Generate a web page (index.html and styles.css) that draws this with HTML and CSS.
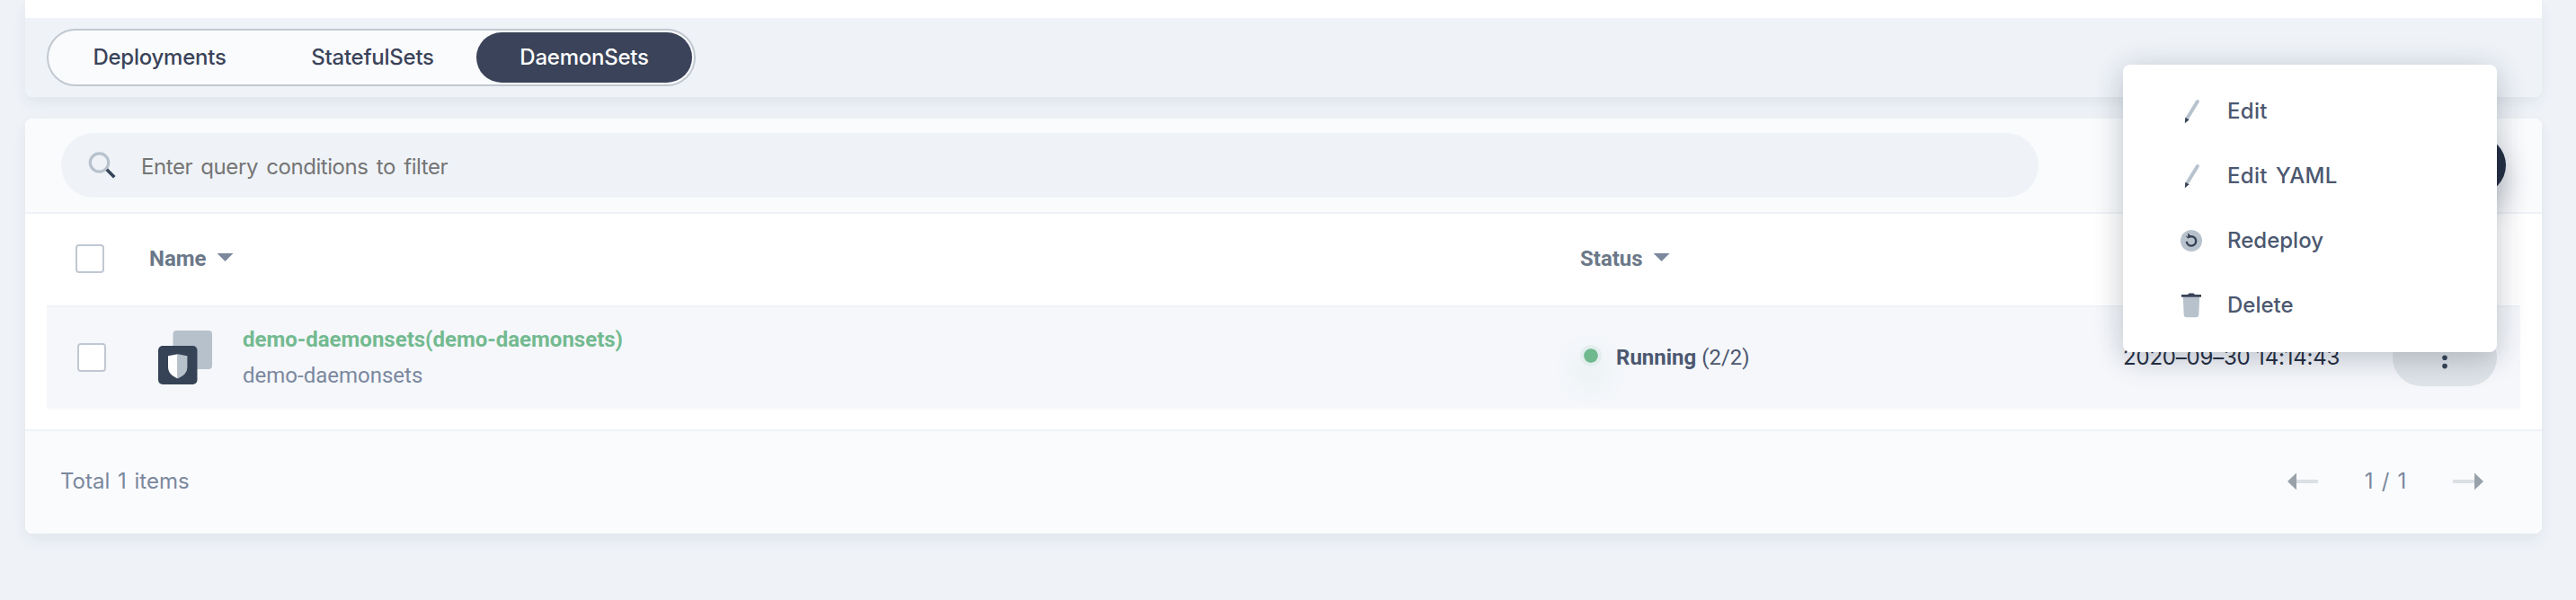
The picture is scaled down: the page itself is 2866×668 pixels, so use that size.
FILE: index.html
```html
<!DOCTYPE html>
<html lang="en">
<head>
<meta charset="utf-8">
<title>Workloads</title>
<link rel="stylesheet" href="styles.css">
</head>
<body>
<main class="page">
  <section class="card banner">
    <div class="banner-top"></div>
    <div class="banner-bar">
      <nav class="tabs">
        <a class="tab tab-deploy">Deployments</a>
        <a class="tab tab-stateful">StatefulSets</a>
        <a class="tab active">DaemonSets</a>
      </nav>
    </div>
  </section>

  <section class="card list">
    <header class="toolbar">
      <div class="search">
        <svg class="search-icon" width="32" height="32" viewBox="0 0 32 32">
          <circle cx="12.5" cy="13" r="10.2" fill="none" stroke="#b7c2cd" stroke-width="3.2"/>
          <path d="M20.800 20.800L29.300 29.300" stroke="#37445a" stroke-width="3.600"/>
        </svg>
        <span class="placeholder">Enter query conditions to filter</span>
      </div>
      <div class="create"></div>
    </header>

    <div class="table">
      <div class="row head">
        <span class="check"></span>
        <span class="col-name th">Name<i class="caret"></i></span>
        <span class="col-status th">Status<i class="caret"></i></span>
      </div>
      <div class="row item">
        <span class="check"></span>
        <div class="col-name workload">
          <svg width="80" height="80" viewBox="0 0 80 80">
            <rect x="26.5" y="10" width="43.5" height="43" rx="4" fill="#b6c1cc"/>
            <rect x="10" y="27" width="43.5" height="43" rx="5" fill="#364356"/>
            <path d="M31.700 36.300L21 38.200V50c0 7 4 10.500 10.700 13.500z" fill="#fff"/>
            <path d="M31.700 36.300L42.400 38.200V50c0 7-4 10.500-10.700 13.500z" fill="#b6c1cc"/>
          </svg>
          <div class="names">
            <a class="title">demo-daemonsets(demo-daemonsets)</a>
            <span class="desc">demo-daemonsets</span>
          </div>
        </div>
        <div class="col-status status"><i class="dot"></i><b>Running</b><span>(2/2)</span></div>
        <div class="col-date">2020–09–30 14:14:43</div>
        <div class="more">
          <svg width="8" height="28" viewBox="0 0 8 28" fill="#364356">
            <circle cx="4" cy="4.800" r="2.800"/><circle cx="4" cy="14.200" r="2.800"/><circle cx="4" cy="23.600" r="2.800"/>
          </svg>
          <div class="menu">
            <a class="menu-item"><svg width="32" height="32" viewBox="0 0 32 32"><path d="M12 22.700L22.900 5" stroke="#b7c2cd" stroke-width="4" stroke-linecap="round"/><path d="M9.300 22.800L13.700 25.300L8.800 29.300z" fill="#364356"/></svg><span class="edit">Edit</span></a>
            <a class="menu-item"><svg width="32" height="32" viewBox="0 0 32 32"><path d="M12 22.700L22.900 5" stroke="#b7c2cd" stroke-width="4" stroke-linecap="round"/><path d="M9.300 22.800L13.700 25.300L8.800 29.300z" fill="#364356"/></svg><span class="edit">Edit YAML</span></a>
            <a class="menu-item"><svg width="32" height="32" viewBox="0 0 32 32"><circle cx="16" cy="16" r="12" fill="#b7c2cd"/><path d="M12.300 11.200H16a5.200 5.200 0 1 1-5.200 5.600" fill="none" stroke="#364356" stroke-width="2.400"/><path d="M12.600 7.800V13L16 11.200M12.600 13l-2.200-1.800z" fill="#364356" stroke="#364356" stroke-width=".8"/></svg>Redeploy</a>
            <a class="menu-item"><svg width="32" height="32" viewBox="0 0 32 32"><path d="M6.800 6.500H25.200L24.300 26.500Q24 29.200 21.500 29.200H10.500Q8 29.200 7.700 26.500z" fill="#b7c2cd"/><path d="M5 4H12L13.500 2.500H18.500L20 4H27V6.800H5z" fill="#364356"/></svg>Delete</a>
          </div>
        </div>
      </div>
    </div>

    <footer class="footer">
      <span class="total">Total 1 items</span>
      <div class="pager">
        <svg width="34" height="20" viewBox="0 0 34 20"><path d="M9 8H34V12H9z" fill="#dbe0e6"/><path d="M0 10L10 .5V19.500z" fill="#99a1ab"/></svg>
        <span class="pages">1 / 1</span>
        <svg width="34" height="20" viewBox="0 0 34 20"><path d="M0 8H25V12H0z" fill="#dbe0e6"/><path d="M34 10L24 .5V19.500z" fill="#99a1ab"/></svg>
      </div>
    </footer>
  </section>
</main>
</body>
</html>
```
FILE: styles.css
```css
* { box-sizing: border-box; }
body {
  margin: 0;
  height: 668px;
  overflow: hidden;
  background: #eff3f8;
  font: 400 24px/32px Inter, "Liberation Sans", sans-serif;
  color: #3a4359;
}
.page {
  display: flex;
  flex-direction: column;
  gap: 24px;
  padding: 0 38px 0 28px;
}
.card {
  border-radius: 8px;
  box-shadow: 0 8px 16px rgba(36, 46, 66, .06), 0 0 28px rgba(36, 46, 66, .015);
}
.banner-top { height: 20px; background: #fff; }
.banner-bar {
  height: 88px;
  padding: 12px 24px;
  background: #eff3f8;
  border-radius: 0 0 8px 8px;
}
.tabs {
  display: flex;
  width: 722px;
  height: 64px;
  padding: 2px;
  border: 2px solid #c1c8d0;
  border-radius: 32px;
  background: #fafbfd;
}
.tab {
  flex: 0 0 240px;
  height: 56px;
  border-radius: 28px;
  line-height: 56px;
  font-weight: 500;
  letter-spacing: -.25px;
  text-align: center;
  white-space: nowrap;
}
.tab-deploy { flex-basis: 243px; }
.tab-stateful { flex-basis: 231px; }
.tab.active { background: #3a4359; color: #fff; }

.list { background: #fff; }
.toolbar {
  display: flex;
  justify-content: space-between;
  height: 106px;
  padding: 16px 40px;
  background: #fafbfd;
  border-bottom: 2px solid #eff2f6;
  border-radius: 8px 8px 0 0;
}
.search {
  display: flex;
  align-items: center;
  gap: 27px;
  width: 2200px;
  height: 72px;
  padding-left: 30px;
  border-radius: 36px;
  background: #eff3f8;
}
.placeholder {
  padding-top: 3px;
  color: #757575;
  letter-spacing: -.44px;
  word-spacing: 3px;
}
.create {
  width: 192px;
  height: 64px;
  margin-top: 4px;
  border-radius: 32px;
  background: #242e42;
  box-shadow: 0 16px 32px rgba(36, 46, 66, .25);
}

.table { padding: 0 24px 22px; }
.row { display: flex; align-items: center; }
.head { height: 102px; padding: 0 0 2px 32px; }
.item {
  height: 116px;
  padding-left: 34px;
  padding-right: 26px;
  background: #f5f7fb;
  border-top: 2px solid #eff3f7;
  border-bottom: 2px solid #f9fafc;
}
.check {
  flex: none;
  width: 32px;
  height: 32px;
  border: 2px solid #c1c8d2;
  border-radius: 4px;
  background: #fff;
}
.th {
  display: flex;
  align-items: center;
  gap: 12px;
  font-family: Roboto, sans-serif;
  font-weight: 700;
  color: #6b7888;
}
.caret {
  width: 18px;
  height: 9px;
  margin-bottom: 3px;
  background: #7c899d;
  clip-path: polygon(0 0, 100% 0, 50% 100%);
}
.head .col-name { width: 1592px; margin-left: 50px; }
.item .col-name { width: 1592px; margin-left: 48px; }
.workload { display: flex; align-items: center; gap: 24px; }
.names { display: flex; flex-direction: column; gap: 8px; font-family: Roboto, sans-serif; }
.title { font-weight: 700; color: #73ba90; }
.desc { color: #7b889e; }
.status {
  display: flex;
  align-items: center;
  width: 604px;
  font-family: Roboto, sans-serif;
  color: #4c5870;
}
.dot {
  width: 24px;
  height: 24px;
  margin: -5px 16px 0 0;
  border: 4px solid #e4eeee;
  border-radius: 50%;
  background: #70b98f;
  background-clip: padding-box;
  box-shadow: 0 16px 32px rgba(85, 188, 138, .18);
}
.status b { margin-right: 6px; }
.col-date {
  width: 300px;
  color: #242e42;
  letter-spacing: -.2px;
  white-space: nowrap;
}
.more {
  position: relative;
  display: flex;
  justify-content: center;
  align-items: center;
  width: 116px;
  height: 64px;
  border-radius: 32px;
  background: #dfe4e9;
}
.menu {
  position: absolute;
  right: 0;
  bottom: 38px;
  width: 416px;
  height: 320px;
  padding: 16px 60px;
  border-radius: 8px;
  background: #fff;
  box-shadow: 0 8px 32px rgba(36, 46, 66, .22), 0 0 40px rgba(36, 46, 66, .06);
}
.menu-item {
  display: flex;
  align-items: center;
  gap: 24px;
  height: 72px;
  font-weight: 500;
  color: #4c5870;
  white-space: nowrap;
}
.edit { letter-spacing: .3px; word-spacing: 2.5px; }
.footer {
  display: flex;
  align-items: center;
  justify-content: space-between;
  height: 116px;
  padding: 0 65px 2px 39px;
  border-top: 2px solid #eff2f6;
  border-radius: 0 0 8px 8px;
  background: #fafbfd;
  color: #7b889e;
}
.total { word-spacing: 2px; }
.pager { display: flex; align-items: center; justify-content: space-between; width: 218px; }
.pages { word-spacing: 2.5px; }
```
